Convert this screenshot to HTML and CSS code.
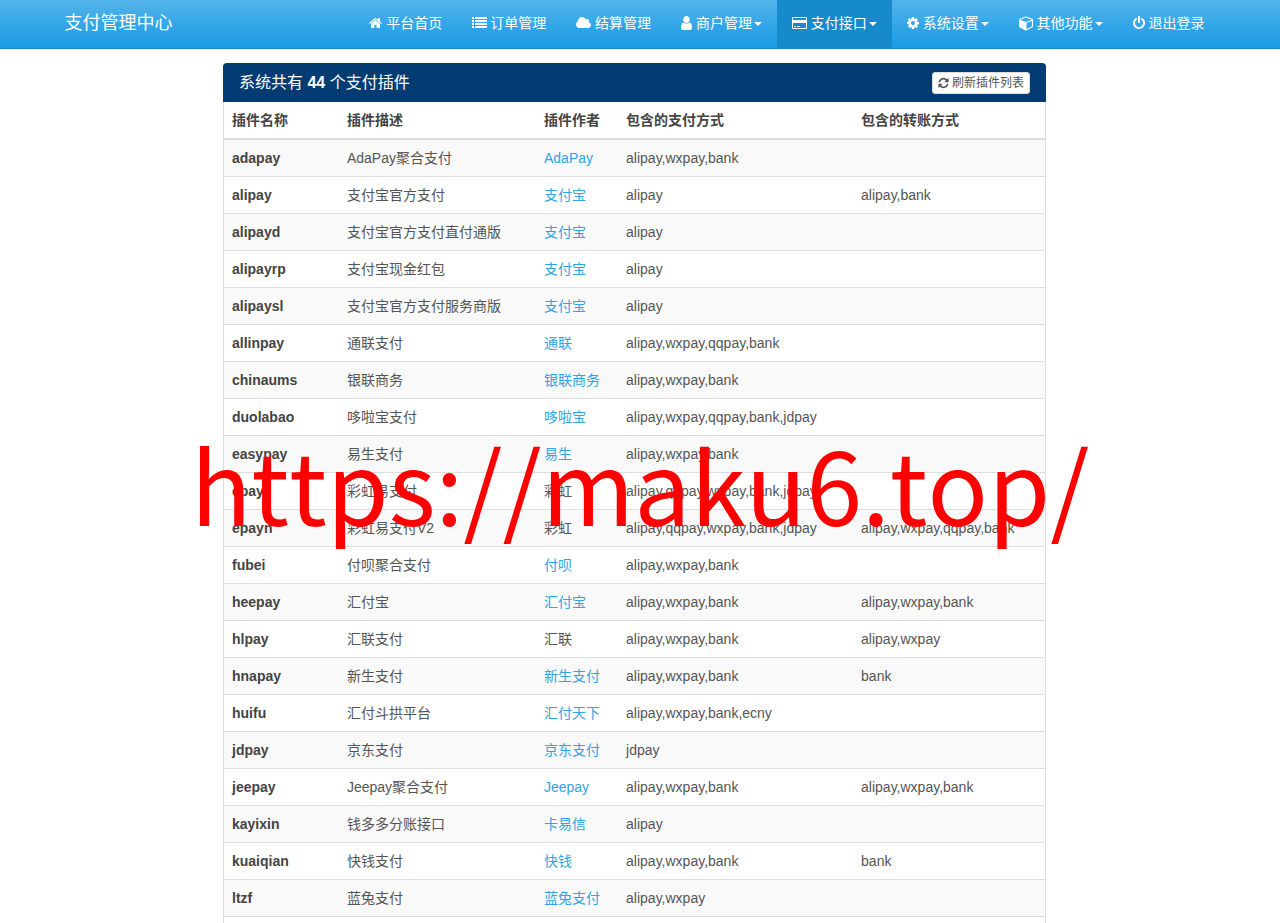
FILE: index.html
```html
<!DOCTYPE html>
<html lang="zh-CN">
<head>
  <meta charset="utf-8">
  <meta name="viewport" content="width=device-width, initial-scale=1">
  <title>支付管理中心</title>
  <link rel="stylesheet" href="styles.css">
</head>
<body>
  <nav class="navbar">
    <div class="container">
      <a class="navbar-brand" href="#">支付管理中心</a>
      <ul class="nav">
        <li><a href="#"><svg class="icon" width="13" height="14" viewBox="0 0 1664 1792"><path d="M1408 992v480q0 26-19 45t-45 19h-384v-384h-256v384h-384q-26 0-45-19t-19-45v-480q0-1 .5-3t.5-3l575-474 575 474q1 2 1 6zm223-69l-62 74q-8 9-21 11h-3q-13 0-21-7l-692-577-692 577q-12 8-24 7-13-2-21-11l-62-74q-8-10-7-23.500t11-21.500l719-599q32-26 76-26t76 26l244 204v-195q0-14 9-23t23-9h192q14 0 23 9t9 23v408l219 182q10 8 11 21.500t-7 23.500z"/></svg> 平台首页</a></li>
        <li><a href="#"><svg class="icon" width="14" height="14" viewBox="0 0 14 14"><path d="M0 1h2v2H0zM3 1h12v2H3zM0 4h2v2H0zM3 4h12v2H3zM0 7h2v2H0zM3 7h12v2H3zM0 10h2v2H0zM3 10h12v2H3z"/></svg> 订单管理</a></li>
        <li><a href="#"><svg class="icon" width="15" height="14" viewBox="64 0 1920 1792"><path d="M1984 1152q0 159-112.500 271.500t-271.500 112.500h-1088q-185 0-316.500-131.500t-131.500-316.500q0-132 71-241.500t187-163.500q-2-28-2-43 0-212 150-362t362-150q158 0 286.500 88t187.500 230q70-62 166-62 106 0 181 75t75 181q0 75-41 138 129 30 213 134.500t84 239.500z"/></svg> 结算管理</a></li>
        <li><a href="#"><svg class="icon" width="11" height="14" viewBox="0 128 1280 1536" preserveAspectRatio="none"><path d="M1280 1399q0 109-62.500 187t-150.500 78h-854q-88 0-150.500-78t-62.500-187q0-85 8.500-160.500t31.500-152 58.500-131 94-89 134.500-34.500q131 128 313 128t313-128q76 0 134.500 34.500t94 89 58.500 131 31.500 152 8.500 160.500zm-256-887q0 159-112.500 271.500t-271.500 112.500-271.500-112.500-112.500-271.500 112.500-271.500 271.500-112.500 271.500 112.500 112.500 271.500z"/></svg> 商户管理<span class="caret"></span></a></li>
        <li class="active"><a href="#"><svg class="icon" width="15" height="14" viewBox="0 0 1920 1792"><path d="M1760 128q66 0 113 47t47 113v1216q0 66-47 113t-113 47h-1600q-66 0-113-47t-47-113v-1216q0-66 47-113t113-47h1600zm-1600 128q-13 0-22.500 9.500t-9.500 22.500v224h1664v-224q0-13-9.500-22.500t-22.500-9.500h-1600zm1600 1280q13 0 22.500-9.500t9.500-22.500v-608h-1664v608q0 13 9.500 22.500t22.500 9.500h1600zm-1504-128v-128h256v128h-256zm384 0v-128h384v128h-384z"/></svg> 支付接口<span class="caret"></span></a></li>
        <li><a href="#"><svg class="icon" width="12" height="14" viewBox="0 0 1536 1792"><path d="M1024 896q0-106-75-181t-181-75-181 75-75 181 75 181 181 75 181-75 75-181zm512-109v222q0 12-8 23t-20 13l-185 28q-19 54-39 91 35 50 107 138 10 12 10 25t-9 23q-27 37-99 108t-94 71q-12 0-26-9l-138-108q-44 23-91 38-16 136-29 186-7 28-36 28h-222q-14 0-24.500-8.500t-11.500-21.500l-28-184q-49-16-90-37l-141 107q-10 9-25 9-14 0-25-11-126-114-165-168-7-10-7-23 0-12 8-23 15-21 51-66.500t54-70.500q-27-50-41-99l-183-27q-13-2-21-12.500t-8-23.500v-222q0-12 8-23t19-13l186-28q14-46 39-92-40-57-107-138-10-12-10-24 0-10 9-23 26-36 98.500-107.500t94.500-71.500q13 0 26 10l138 107q44-23 91-38 16-136 29-186 7-28 36-28h222q14 0 24.500 8.500t11.500 21.500l28 184q49 16 90 37l142-107q9-9 24-9 13 0 25 10 129 119 165 170 7 8 7 22 0 12-8 23-15 21-51 66.500t-54 70.500q26 50 41 98l183 28q13 2 21 12.500t8 23.500z"/></svg> 系统设置<span class="caret"></span></a></li>
        <li><a href="#"><svg class="icon" width="14" height="14" viewBox="0 64 1664 1664"><path d="M896 1629l640-349v-636l-640 233v752zm-64-865l698-254-698-254-698 254zm832-252v768q0 35-18 65t-49 47l-704 384q-28 16-61 16t-61-16l-704-384q-31-17-49-47t-18-65v-768q0-40 23-73t61-47l704-256q22-8 44-8t44 8l704 256q38 14 61 47t23 73z"/></svg> 其他功能<span class="caret"></span></a></li>
        <li><a href="#"><svg class="icon" width="12" height="14" viewBox="0 0 1536 1792"><path d="M1536 896q0 156-61 298t-164 245-245 164-298 61-298-61-245-164-164-245-61-298q0-182 80.500-343t226.500-270q43-32 95.500-25t83.500 50q32 42 24.500 94.500t-49.500 84.500q-98 74-151.500 181t-53.500 228q0 104 40.500 198.500t109.500 163.500 163.500 109.500 198.500 40.500 198.500-40.500 163.500-109.500 109.500-163.500 40.500-198.500q0-121-53.500-228t-151.500-181q-42-32-49.500-84.500t24.500-94.500q31-43 84-50t95 25q146 109 226.500 270t80.500 343zm-640-768v640q0 52-38 90t-90 38-90-38-38-90v-640q0-52 38-90t90-38 90 38 38 90z"/></svg> 退出登录</a></li>
      </ul>
    </div>
  </nav>

  <main class="content">
    <div class="panel">
      <div class="panel-heading">
        <h3 class="panel-title">系统共有 <b>44</b> 个支付插件</h3>
        <button type="button" class="btn"><svg class="icon" width="11" height="12" viewBox="0 0 1536 1792"><path d="M1511 1056q0 5-1 7-64 268-268 434.500t-478 166.500q-146 0-282.500-55t-243.500-157l-129 129q-19 19-45 19t-45-19-19-45v-448q0-26 19-45t45-19h448q26 0 45 19t19 45-19 45l-137 137q71 66 161 102t187 36q134 0 250-65t186-179q11-17 53-117 8-23 30-23h192q13 0 22.500 9.500t9.500 22.500zm25-800v448q0 26-19 45t-45 19h-448q-26 0-45-19t-19-45 19-45l138-138q-148-137-349-137-134 0-250 65t-186 179q-11 17-53 117-8 23-30 23h-199q-13 0-22.500-9.500t-9.500-22.500v-7q65-268 270-434.500t480-166.500q146 0 284 55.500t245 156.500l130-129q19-19 45-19t45 19 19 45z"/></svg> 刷新插件列表</button>
      </div>
      <table class="table">
        <thead>
          <tr><th class="col-name">插件名称</th><th class="col-desc">插件描述</th><th class="col-author">插件作者</th><th class="col-pay">包含的支付方式</th><th>包含的转账方式</th></tr>
        </thead>
        <tbody>
          <tr><td><b>adapay</b></td><td>AdaPay聚合支付</td><td><a href="#">AdaPay</a></td><td>alipay,wxpay,bank</td><td></td></tr>
          <tr><td><b>alipay</b></td><td>支付宝官方支付</td><td><a href="#">支付宝</a></td><td>alipay</td><td>alipay,bank</td></tr>
          <tr><td><b>alipayd</b></td><td>支付宝官方支付直付通版</td><td><a href="#">支付宝</a></td><td>alipay</td><td></td></tr>
          <tr><td><b>alipayrp</b></td><td>支付宝现金红包</td><td><a href="#">支付宝</a></td><td>alipay</td><td></td></tr>
          <tr><td><b>alipaysl</b></td><td>支付宝官方支付服务商版</td><td><a href="#">支付宝</a></td><td>alipay</td><td></td></tr>
          <tr><td><b>allinpay</b></td><td>通联支付</td><td><a href="#">通联</a></td><td>alipay,wxpay,qqpay,bank</td><td></td></tr>
          <tr><td><b>chinaums</b></td><td>银联商务</td><td><a href="#">银联商务</a></td><td>alipay,wxpay,bank</td><td></td></tr>
          <tr><td><b>duolabao</b></td><td>哆啦宝支付</td><td><a href="#">哆啦宝</a></td><td>alipay,wxpay,qqpay,bank,jdpay</td><td></td></tr>
          <tr><td><b>easypay</b></td><td>易生支付</td><td><a href="#">易生</a></td><td>alipay,wxpay,bank</td><td></td></tr>
          <tr><td><b>epay</b></td><td>彩虹易支付</td><td>彩虹</td><td>alipay,qqpay,wxpay,bank,jdpay</td><td></td></tr>
          <tr><td><b>epayn</b></td><td>彩虹易支付V2</td><td>彩虹</td><td>alipay,qqpay,wxpay,bank,jdpay</td><td>alipay,wxpay,qqpay,bank</td></tr>
          <tr><td><b>fubei</b></td><td>付呗聚合支付</td><td><a href="#">付呗</a></td><td>alipay,wxpay,bank</td><td></td></tr>
          <tr><td><b>heepay</b></td><td>汇付宝</td><td><a href="#">汇付宝</a></td><td>alipay,wxpay,bank</td><td>alipay,wxpay,bank</td></tr>
          <tr><td><b>hlpay</b></td><td>汇联支付</td><td>汇联</td><td>alipay,wxpay,bank</td><td>alipay,wxpay</td></tr>
          <tr><td><b>hnapay</b></td><td>新生支付</td><td><a href="#">新生支付</a></td><td>alipay,wxpay,bank</td><td>bank</td></tr>
          <tr><td><b>huifu</b></td><td>汇付斗拱平台</td><td><a href="#">汇付天下</a></td><td>alipay,wxpay,bank,ecny</td><td></td></tr>
          <tr><td><b>jdpay</b></td><td>京东支付</td><td><a href="#">京东支付</a></td><td>jdpay</td><td></td></tr>
          <tr><td><b>jeepay</b></td><td>Jeepay聚合支付</td><td><a href="#">Jeepay</a></td><td>alipay,wxpay,bank</td><td>alipay,wxpay,bank</td></tr>
          <tr><td><b>kayixin</b></td><td>钱多多分账接口</td><td><a href="#">卡易信</a></td><td>alipay</td><td></td></tr>
          <tr><td><b>kuaiqian</b></td><td>快钱支付</td><td><a href="#">快钱</a></td><td>alipay,wxpay,bank</td><td>bank</td></tr>
          <tr><td><b>ltzf</b></td><td>蓝兔支付</td><td><a href="#">蓝兔支付</a></td><td>alipay,wxpay</td><td></td></tr>
        </tbody>
      </table>
    </div>
  </main>

  <div class="watermark">https://maku6.top/</div>
</body>
</html>
```
FILE: styles.css
```css
* {
  box-sizing: border-box;
}

body {
  margin: 0;
  min-height: 100vh;
  display: flex;
  flex-direction: column;
  position: relative;
  font-family: "Liberation Sans", Arial, "Noto Sans CJK SC", sans-serif;
  font-size: 14px;
  line-height: 20px;
  color: #555;
  background: #fff;
}

a {
  color: #2fa4e7;
  text-decoration: none;
}

.icon {
  fill: currentColor;
  vertical-align: -2px;
  overflow: visible;
}

/* top bar */
.navbar {
  padding-right: 11px;
  background: linear-gradient(#54b4eb, #2fa4e7 60%, #1d9ce5);
  border-bottom: 1px solid #178acc;
  box-shadow: 0 1px 8px rgba(0, 0, 0, 0.06);
}

.container {
  max-width: 1170px;
  margin: 0 auto;
  padding-left: 15px;
  display: flex;
  justify-content: space-between;
}

.navbar-brand {
  padding: 13px 0 12px;
  font-size: 18px;
  color: #fff;
}

.nav {
  display: flex;
  margin: 0;
  padding: 0;
  list-style: none;
}

.nav a {
  display: block;
  padding: 13px 15px 15px;
  color: #fff;
  white-space: nowrap;
}

.nav .active a,
.nav a:hover {
  background: #178acc;
}

.caret {
  display: inline-block;
  margin-left: 2px;
  vertical-align: middle;
  border-top: 4px solid;
  border-right: 4px solid transparent;
  border-left: 4px solid transparent;
}

/* plugin list */
.content {
  flex: 1;
  display: flex;
  justify-content: center;
  padding: 14px 11px 0 0;
}

.panel {
  width: 100%;
  max-width: 823px;
  border: 1px solid #ddd;
  border-width: 0 1px;
  border-radius: 4px 4px 0 0;
}

.panel-heading {
  display: flex;
  align-items: center;
  justify-content: space-between;
  margin: 0 -1px;
  padding: 8px 16px;
  background: #033c73;
  border-radius: 4px 4px 0 0;
  color: #fff;
}

.panel-title {
  margin: 0;
  font-size: 16px;
  line-height: 23px;
  font-weight: normal;
}

.btn {
  padding: 1px 5px;
  border: 1px solid #ddd;
  border-radius: 3px;
  background: #fff;
  color: #555;
  font-family: inherit;
  font-size: 12px;
  line-height: 18px;
  cursor: pointer;
}

.table {
  width: 100%;
  table-layout: fixed;
  border-spacing: 0;
}

.table th,
.table td {
  height: 37px;
  padding: 8px;
  text-align: left;
  border-bottom: 1px solid #ddd;
}

.table th {
  height: 38px;
  border-bottom-width: 2px;
}

.table th,
.table b {
  color: #444;
}

.table tbody tr:nth-child(odd) {
  background: #f9f9f9;
}

.col-name {
  width: 14%;
}

.col-desc {
  width: 24%;
}

.col-author {
  width: 10%;
}

.col-pay {
  width: 235px;
}

.watermark {
  position: absolute;
  top: 433px;
  left: 0;
  right: 0;
  text-align: center;
  font-family: "Noto Sans CJK SC", sans-serif;
  font-size: 100px;
  font-kerning: none;
  line-height: 100px;
  color: #f00;
  white-space: nowrap;
  pointer-events: none;
}
```
